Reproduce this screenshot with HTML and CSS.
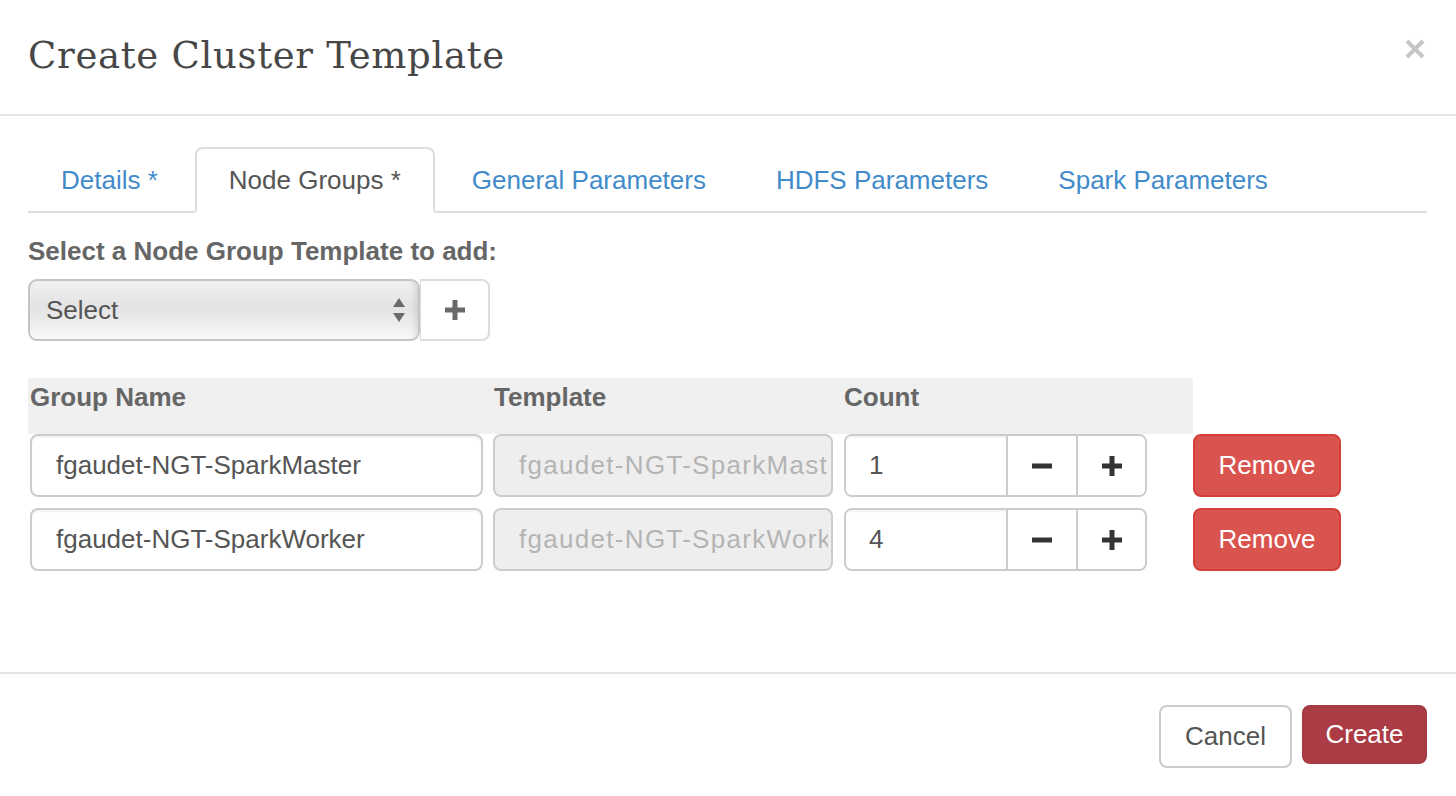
FILE: index.html
```html
<!DOCTYPE html>
<html lang="en">
<head>
<meta charset="utf-8">
<title>Create Cluster Template</title>
<link rel="stylesheet" href="styles.css">
</head>
<body>
<div class="modal">
  <div class="modal-header">
    <h3 class="modal-title">Create Cluster Template</h3>
    <button class="close" type="button" aria-label="Close">
      <svg width="20" height="20" viewBox="0 0 20 20"><path d="M2 2L18 18M18 2L2 18" stroke="#c6c6c6" stroke-width="4" stroke-linecap="butt"/></svg>
    </button>
  </div>
  <div class="modal-body">
    <ul class="nav-tabs">
      <li><a>Details <span class="req">*</span></a></li>
      <li class="active"><a>Node Groups <span class="req">*</span></a></li>
      <li><a>General Parameters</a></li>
      <li><a>HDFS Parameters</a></li>
      <li><a>Spark Parameters</a></li>
    </ul>
    <div class="form-label">Select a Node Group Template to add:</div>
    <div class="select-row">
      <div class="select">
        <span>Select</span>
        <svg class="updown" width="14" height="26" viewBox="0 0 14 26"><path d="M7 1L13 10H1Z M1 16H13L7 25Z" fill="#6a6a6a"/></svg>
      </div>
      <button class="add-btn" type="button">
        <svg width="22" height="22" viewBox="0 0 22 22"><path d="M11 1V21M1 11H21" stroke="#6a6a6a" stroke-width="5"/></svg>
      </button>
    </div>
    <div class="ng-table">
      <div class="thead">
        <div class="th">Group Name</div>
        <div class="th">Template</div>
        <div class="th">Count</div>
      </div>
      <div class="trow">
        <input class="field" type="text" value="fgaudet-NGT-SparkMaster">
        <input class="field disabled" type="text" value="fgaudet-NGT-SparkMaster" disabled>
        <div class="count-group">
          <input class="count-input" type="text" value="1">
          <button class="step" type="button"><svg width="22" height="22" viewBox="0 0 22 22"><path d="M1 11H21" stroke="#333" stroke-width="5"/></svg></button>
          <button class="step" type="button"><svg width="22" height="22" viewBox="0 0 22 22"><path d="M11 1V21M1 11H21" stroke="#333" stroke-width="5"/></svg></button>
        </div>
        <button class="btn-remove" type="button">Remove</button>
      </div>
      <div class="trow">
        <input class="field" type="text" value="fgaudet-NGT-SparkWorker">
        <input class="field disabled" type="text" value="fgaudet-NGT-SparkWorker" disabled>
        <div class="count-group">
          <input class="count-input" type="text" value="4">
          <button class="step" type="button"><svg width="22" height="22" viewBox="0 0 22 22"><path d="M1 11H21" stroke="#333" stroke-width="5"/></svg></button>
          <button class="step" type="button"><svg width="22" height="22" viewBox="0 0 22 22"><path d="M11 1V21M1 11H21" stroke="#333" stroke-width="5"/></svg></button>
        </div>
        <button class="btn-remove" type="button">Remove</button>
      </div>
    </div>
  </div>
  <div class="modal-footer">
    <button class="btn-cancel" type="button">Cancel</button>
    <button class="btn-create" type="button">Create</button>
  </div>
</div>
</body>
</html>
```
FILE: styles.css
```css
* { box-sizing: border-box; }
html, body { margin: 0; padding: 0; background: #fff; }
body {
  font-family: "Liberation Sans", Arial, Helvetica, sans-serif;
  font-size: 26px;
  color: #555;
  width: 1456px;
  height: 796px;
  overflow: hidden;
}
button, input { font-family: inherit; font-size: 26px; }

.modal-header {
  height: 116px;
  border-bottom: 2px solid #e5e5e5;
  display: flex;
  align-items: center;
  justify-content: space-between;
  padding: 0 30px 4px 28px;
}
.modal-title {
  margin: 0;
  font-family: "DejaVu Serif", "Liberation Serif", serif;
  font-weight: normal;
  font-size: 37px;
  color: #474747;
  letter-spacing: 0.7px;
}
.close {
  border: 0;
  background: none;
  padding: 0;
  margin-top: -12px;
  width: 22px;
  height: 22px;
  display: flex;
  align-items: center;
  justify-content: center;
}

.modal-body {
  height: 556px;
  padding: 31px 29px 0 28px;
}

.nav-tabs {
  list-style: none;
  margin: 0;
  padding: 0;
  display: flex;
  border-bottom: 2px solid #ddd;
}
.nav-tabs li {
  margin-right: 4px;
  margin-bottom: -2px;
}
.nav-tabs a {
  display: block;
  padding: 0 31px;
  line-height: 62px;
  border: 2px solid transparent;
  border-radius: 8px 8px 0 0;
  color: #428bca;
  white-space: nowrap;
}
.nav-tabs .active a {
  color: #555;
  background: #fff;
  border-color: #ddd #ddd transparent;
  padding: 0 32px 0 32px;
}

.form-label {
  margin-top: 20px;
  line-height: 36px;
  font-weight: bold;
  color: #666;
}

.select-row {
  margin-top: 10px;
  display: flex;
}
.select {
  width: 392px;
  height: 62px;
  border: 2px solid #c4c4c4;
  border-radius: 9px;
  background: linear-gradient(#f1f1f1 0%, #e3e3e3 45%, #efefef 80%, #fafafa 100%);
  box-shadow: inset -6px 0 6px -4px rgba(0,0,0,0.12);
  display: flex;
  align-items: center;
  justify-content: space-between;
  padding: 0 12px 0 16px;
  color: #555;
}
.add-btn {
  width: 70px;
  height: 62px;
  border: 2px solid #ddd;
  border-left-width: 1px;
  border-radius: 0 8px 8px 0;
  background: #fff;
  display: flex;
  align-items: center;
  justify-content: center;
  padding: 0;
}

.ng-table {
  margin-top: 37px;
}
.thead {
  width: 1165px;
  height: 56px;
  background: #f0f0f0;
  display: grid;
  grid-template-columns: 465px 351px 349px;
}
.th {
  padding-left: 2px;
  line-height: 38px;
  font-weight: bold;
  color: #666;
}
.th:nth-child(2) { padding-left: 1px; }
.th:nth-child(3) { padding-left: 0; }
.trow {
  display: grid;
  grid-template-columns: 463px 351px 349px 148px;
  padding-left: 2px;
  margin-bottom: 11px;
  height: 63px;
}
.field {
  width: 453px;
  height: 63px;
  border: 2px solid #ccc;
  border-radius: 8px;
  padding: 0 0 0 24px;
  color: #555;
  background: #fff;
  box-shadow: inset 0 2px 2px rgba(0,0,0,0.05);
  outline: none;
}
.field.disabled {
  width: 340px;
  background: #eee;
  color: #b4b4b4;
  -webkit-text-fill-color: #b4b4b4;
  opacity: 1;
  box-shadow: none;
  padding-right: 3px;
  letter-spacing: 1.3px;
}
.count-group {
  width: 303px;
  height: 63px;
  border: 2px solid #ccc;
  border-radius: 8px;
  display: flex;
  overflow: hidden;
}
.count-input {
  width: 160px;
  height: 100%;
  border: 0;
  padding: 0 0 0 23px;
  color: #555;
  outline: none;
  box-shadow: inset 0 2px 2px rgba(0,0,0,0.05);
}
.step {
  width: 70px;
  height: 100%;
  border: 0;
  border-left: 2px solid #ccc;
  background: #fff;
  display: flex;
  align-items: center;
  justify-content: center;
  padding: 0;
}
.step:last-child { width: 69px; }
.btn-remove {
  width: 148px;
  height: 63px;
  background: #d9534f;
  border: 2px solid #d43f3a;
  border-radius: 8px;
  color: #fff;
  padding: 0;
}

.modal-footer {
  border-top: 2px solid #e5e5e5;
  display: flex;
  justify-content: flex-end;
  align-items: flex-start;
  gap: 10px;
  padding: 31px 29px 0 0;
}
.btn-cancel {
  width: 133px;
  height: 63px;
  background: #fff;
  border: 2px solid #ccc;
  border-radius: 8px;
  color: #555;
  padding: 0;
}
.btn-create {
  width: 125px;
  height: 59px;
  background: #ab3c45;
  border: 2px solid #a63a43;
  border-radius: 8px;
  color: #fff;
  padding: 0;
}
```
